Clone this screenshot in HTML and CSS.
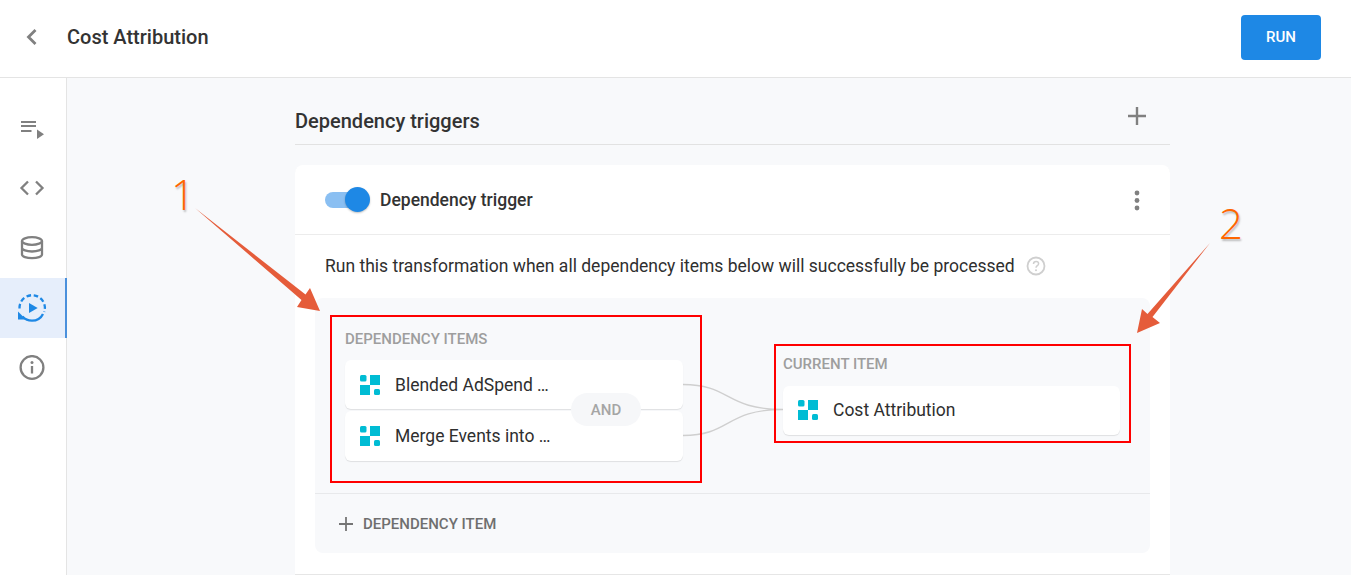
FILE: index.html
```html
<!DOCTYPE html>
<html lang="en">
<head>
<meta charset="utf-8">
<title>Cost Attribution</title>
<link rel="stylesheet" href="styles.css">
</head>
<body>
<div class="app">
  <header class="topbar">
    <svg class="back" width="24" height="26" viewBox="0 0 24 26"><path d="M15.500 6 8.500 13l7 7" fill="none" stroke="#808080" stroke-width="2.800"/></svg>
    <h1 class="title">Cost Attribution</h1>
    <button class="run">RUN</button>
  </header>
  <div class="body">
    <nav class="sidebar">
      <div class="nav-item">
        <svg width="26" height="26" viewBox="0 0 26 26"><path d="M2 7h15M2 11h15M2 16h10.500" stroke="#808080" stroke-width="2" fill="none"/><path d="M18 14.500 25 19.300 18 24z" fill="#808080"/></svg>
      </div>
      <div class="nav-item">
        <svg width="26" height="26" viewBox="0 0 26 26"><path d="M9 6.500 2.500 13 9 19.500M17 6.500l6.500 6.500-6.500 6.500" fill="none" stroke="#808080" stroke-width="2.300"/></svg>
      </div>
      <div class="nav-item">
        <svg width="26" height="26" viewBox="0 0 26 26" fill="none" stroke="#808080" stroke-width="2.300"><ellipse cx="13" cy="6" rx="10" ry="3.800"/><path d="M3 6v13.500c0 2.100 4.500 3.700 10 3.700s10-1.600 10-3.700V6M3 12.800c0 2.100 4.500 3.700 10 3.700s10-1.600 10-3.700"/></svg>
      </div>
      <div class="nav-item active">
        <svg width="30" height="30" viewBox="0 0 30 30"><path d="M2.500 15.500A12.700 12.700 0 1 1 27.200 19" fill="none" stroke="#1e88e5" stroke-width="2.300" stroke-dasharray="4.600 2.700"/><path d="M12 10l8.700 5-8.700 5z" fill="#1e88e5"/><path d="M5.500 23.500c2.400 2.700 5.700 4.200 9.500 4.200 4.800 0 9-2.700 11-6.700" fill="none" stroke="#1e88e5" stroke-width="2.300"/><path d="M1 18.500v8h8z" fill="#1e88e5"/></svg>
      </div>
      <div class="nav-item">
        <svg width="26" height="26" viewBox="0 0 26 26"><circle cx="13" cy="12.500" r="11.400" fill="none" stroke="#808080" stroke-width="2.300"/><path d="M13 11v7.500" stroke="#808080" stroke-width="2.300"/><circle cx="13" cy="7.500" r="1.500" fill="#808080"/></svg>
      </div>
    </nav>
    <main class="main">
      <div class="section-head">
        <h2 class="section-title">Dependency triggers</h2>
        <svg class="plus" width="18" height="18" viewBox="0 0 18 18"><path d="M9 0v18M0 9h18" stroke="#808080" stroke-width="2.400"/></svg>
      </div>
      <section class="card">
        <div class="card-head">
          <span class="toggle"><span class="knob"></span></span>
          <span class="card-title">Dependency trigger</span>
          <svg class="kebab" width="6" height="22" viewBox="0 0 6 22"><circle cx="3" cy="3" r="2.400" fill="#808080"/><circle cx="3" cy="10.500" r="2.400" fill="#808080"/><circle cx="3" cy="18" r="2.400" fill="#808080"/></svg>
        </div>
        <div class="desc">
          <span>Run this transformation when all dependency items below will successfully be processed</span>
          <svg width="20" height="20" viewBox="0 0 20 20"><circle cx="10" cy="10" r="8.500" fill="none" stroke="#cfcfcf" stroke-width="1.800"/><path d="M7.500 8c0-1.500 1.100-2.500 2.600-2.500s2.500 1 2.500 2.200c0 1.900-2.600 2-2.600 4" fill="none" stroke="#cfcfcf" stroke-width="1.500"/><circle cx="10" cy="14.300" r="1" fill="#cfcfcf"/></svg>
        </div>
        <div class="panel">
          <div class="diagram">
            <div class="col col-left">
              <div class="col-label">DEPENDENCY ITEMS</div>
              <div class="item">
                <svg class="tile" width="20" height="20" viewBox="0 0 20 20"><use href="#tile"/></svg>
                <span>Blended AdSpend …</span>
              </div>
              <div class="item">
                <svg class="tile" width="20" height="20" viewBox="0 0 20 20"><use href="#tile"/></svg>
                <span>Merge Events into …</span>
              </div>
              <div class="and">AND</div>
            </div>
            <svg class="links" width="100" height="100" viewBox="0 0 100 100"><path d="M0 39.500c48 0 42 25 100 25M0 90.500c48 0 42-26 100-26" fill="none" stroke="#cfcfcf" stroke-width="1.400"/></svg>
            <div class="col col-right">
              <div class="col-label">CURRENT ITEM</div>
              <div class="item">
                <svg class="tile" width="20" height="20" viewBox="0 0 20 20"><use href="#tile"/></svg>
                <span>Cost Attribution</span>
              </div>
            </div>
          </div>
          <div class="add-row">
            <svg width="14" height="14" viewBox="0 0 14 14"><path d="M7 0v14M0 7h14" stroke="#757575" stroke-width="1.800"/></svg>
            <span>DEPENDENCY ITEM</span>
          </div>
        </div>
      </section>
    </main>
  </div>
  <div class="note-box note-box-1"></div>
  <div class="note-box note-box-2"></div>
  <div class="note-num note-num-1">1</div>
  <div class="note-num note-num-2">2</div>
  <svg class="note-arrows" width="1351" height="575" viewBox="0 0 1351 575">
    <path d="M195 208 305.500 294.500 310 288 320 311 297 307 301.500 300z" fill="#e55c3a"/>
    <path d="M1210 243 1152.500 317 1160 323 1137 333 1142 309 1147.500 314z" fill="#e55c3a"/>
  </svg>
</div>
<svg class="defs" width="0" height="0">
  <defs>
    <g id="tile" fill="#00bcd4">
      <rect x="0" y="0" width="6.500" height="6.500" rx="1.500"/>
      <rect x="10" y="0" width="10" height="10"/>
      <rect x="0" y="10" width="10" height="10"/>
      <rect x="14" y="14" width="6" height="6" rx="1.500"/>
    </g>
  </defs>
</svg>
</body>
</html>
```
FILE: styles.css
```css
* { box-sizing: border-box; }
html, body { margin: 0; padding: 0; height: 100%; overflow: hidden; }
body { font-family: Roboto, "Liberation Sans", sans-serif; color: #2f2f2f; background: #fff; }
.app { position: relative; width: 1351px; height: 575px; display: flex; flex-direction: column; overflow: hidden; }
.defs { position: absolute; }

.topbar { flex: 0 0 78px; display: flex; align-items: center; padding: 0 30px 3px 20px; border-bottom: 1px solid #e4e4e4; background: #fff; }
.back { flex: none; margin-top: -1px; }
.title { margin: -1px 0 0 23px; font-size: 20px; font-weight: 500; color: #333; }
.run { margin-left: auto; width: 80px; height: 45px; border: 0; border-radius: 4px; background: #1e88e5; color: #fff; font: 500 15px Roboto, sans-serif; padding: 0; }

.body { flex: 1; display: flex; min-height: 0; }
.sidebar { flex: 0 0 67px; padding-top: 20px; background: #fff; border-right: 1px solid #e4e4e4; }
.nav-item { height: 60px; display: flex; align-items: center; justify-content: center; padding-right: 2px; }
.nav-item.active { background: #e6eefb; margin-right: -1px; border-right: 2px solid #4a90dc; padding-right: 1px; }

.main { flex: 1; background: #f8f9fb; padding-left: 228px; }
.section-head { width: 875px; height: 67px; display: flex; align-items: center; justify-content: space-between; padding: 19px 24px 0 0; border-bottom: 1px solid #e2e2e2; }
.section-title { margin: 0; font-size: 20px; font-weight: 500; color: #333; }
.plus { margin-top: -10px; }

.card { width: 875px; margin-top: 20px; height: 409px; background: #fff; border-radius: 8px 8px 0 0; box-shadow: 0 1px 0 #e6e6e6; display: flex; flex-direction: column; }
.card-head { flex: 0 0 70px; display: flex; align-items: center; padding: 0 30px; border-bottom: 1px solid #ececec; }
.toggle { position: relative; width: 40px; height: 16px; border-radius: 8px; background: #8abff2; margin-right: 15px; }
.knob { position: absolute; top: -5px; right: -5px; width: 25px; height: 25px; border-radius: 50%; background: #1e88e5; box-shadow: 0 1px 2px rgba(0,0,0,.25); }
.card-title { font-size: 17.500px; font-weight: 500; color: #333; }
.kebab { margin: 2px 0 0 auto; }
.desc { flex: 0 0 63px; display: flex; align-items: center; gap: 11px; padding: 0 30px 1px; font-size: 17.500px; color: #2f2f2f; }
.panel { flex: 0 0 255px; margin: 0 20px; background: #f8f9fb; border-radius: 8px; display: flex; flex-direction: column; }

.diagram { flex: 0 0 196px; display: flex; align-items: center; padding: 0 0 1px 30px; border-bottom: 1px solid #e8e9eb; }
.col { position: relative; flex: none; }
.col-left { width: 338px; }
.col-right { width: 337px; }
.col-label { font-size: 15px; font-weight: 500; line-height: 20px; color: #9e9e9e; margin-bottom: 11px; }
.col-right .col-label { margin-top: -1px; margin-bottom: 12px; }
.item { height: 49px; display: flex; align-items: center; gap: 15px; padding-left: 15px; background: #fff; border-radius: 6px; box-shadow: 0 1px 1px rgba(0,0,0,.1); font-size: 17.500px; color: #2f2f2f; }
.item + .item { margin-top: 2px; height: 50px; }
.col-right .item { padding-bottom: 1px; }
.tile { flex: none; }
.and { position: absolute; left: 226px; top: 64px; width: 70px; height: 33px; border-radius: 17px; background: #f6f7f9; color: #a5a5a5; font-size: 15px; font-weight: 500; display: flex; align-items: center; justify-content: center; }
.links { flex: none; }

.add-row { flex: 1; display: flex; align-items: center; gap: 10px; padding: 0 0 0 24px; color: #6f6f6f; font-size: 15px; font-weight: 500; }

.note-box { position: absolute; border: 2px solid #f00; }
.note-box-1 { left: 330px; top: 315px; width: 372px; height: 168px; }
.note-box-2 { left: 774px; top: 344px; width: 357px; height: 99px; }
.note-num { position: absolute; font-family: "Open Sans", sans-serif; font-weight: 300; font-size: 42px; line-height: 44px; color: #ff6600; text-shadow: 1px 2px 2px rgba(0,0,0,.25); }
.note-num-1 { left: 171px; top: 172px; }
.note-num-2 { left: 1219px; top: 201px; }
.note-arrows { position: absolute; left: 0; top: 0; pointer-events: none; }
```
